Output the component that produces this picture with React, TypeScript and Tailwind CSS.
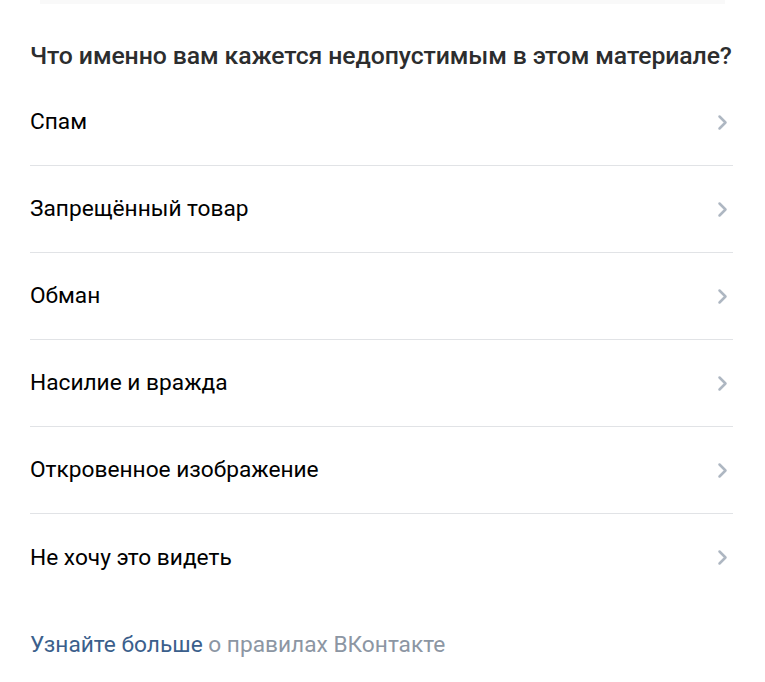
const reasons = [
  "Спам",
  "Запрещённый товар",
  "Обман",
  "Насилие и вражда",
  "Откровенное изображение",
  "Не хочу это видеть",
];

function Chevron() {
  return (
    <svg width="13" height="19" viewBox="0 0 13 19" fill="none" className="shrink-0">
      <path d="M3.5 3.5l6 6-6 6" stroke="#aeb7c2" strokeWidth="2.5" strokeLinecap="round" strokeLinejoin="round" />
    </svg>
  );
}

export default function App() {
  return (
    <div className="min-h-screen bg-white font-['Roboto',sans-serif] antialiased">
      <div className="mx-[40px] h-[4px] bg-[#f9f9f9]" />
      <div className="px-[30px] pr-[32px]">
        <h2 className="mt-[38px] whitespace-nowrap text-[24.8px] font-medium leading-[28px] tracking-[-0.1px] text-[#2c2d2e]">
          Что именно вам кажется недопустимым в этом материале?
        </h2>
        <ul className="mt-[9px]">
          {reasons.map((r, i) => (
            <li
              key={r}
              className={
                "flex h-[87px] items-center justify-between pr-[4px] " +
                (i < reasons.length - 1 ? "border-b border-[#e1e3e6]" : "")
              }
            >
              <span className="text-[22.7px] leading-[26px] text-[#000]">{r}</span>
              <Chevron />
            </li>
          ))}
        </ul>
        <p className="mt-[31px] text-[22.7px] leading-[26px] text-[#8c96a3]">
          <a className="text-[#3b5f8c]">Узнайте больше</a> о правилах ВКонтакте
        </p>
      </div>
    </div>
  );
}
